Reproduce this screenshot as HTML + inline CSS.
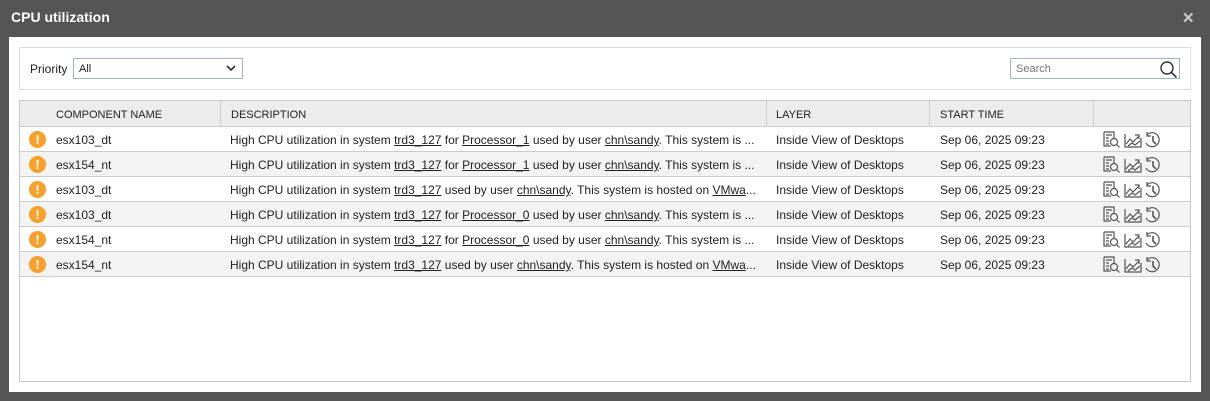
<!DOCTYPE html>
<html><head><meta charset="utf-8"><style>
*{box-sizing:border-box;margin:0;padding:0}
body{width:1210px;height:401px;background:#555555;font-family:"Liberation Sans",Arial,sans-serif;font-size:12px;color:#222;position:relative;overflow:hidden}
.title{position:absolute;left:11px;top:9px;color:#fff;font-weight:bold;font-size:14px}
.close{position:absolute;left:1182px;top:9px;color:#ccc;font-size:15px;font-weight:bold}
.panel{position:absolute;left:9px;top:37px;width:1192px;height:355px;background:#fff}
.filter{position:absolute;left:10px;top:10px;width:1172px;height:43px;border:1px solid #ddd}
.pl{position:absolute;left:10px;top:14px;font-size:12px}
.sel{position:absolute;left:53px;top:10px;width:170px;height:21px;border:1px solid #aab2bd;padding:4px 0 0 5px;font-size:11px}
.sel svg{position:absolute;right:6px;top:6px}
.search{position:absolute;left:990px;top:10px;width:170px;height:21px;border:1px solid #aab2bd;padding:4px 0 0 5px;font-size:11px;color:#777}
.search svg{position:absolute;right:1px;top:1px}
.tbl{position:absolute;left:10px;top:63px;width:1172px;height:282px;border:1px solid #c8c8c8}
.row{position:absolute;left:0;width:1170px;height:25px;border-bottom:1px solid #ccc}
.hdr{background:#ececec;top:0;height:26px;font-size:11px;color:#222}
.c{position:absolute;top:6px;white-space:nowrap}
.hdr .c{top:8px}
.sep{position:absolute;top:0;width:1px;height:26px;background:#ccc}
.g{background:#f3f3f3}
u{text-decoration:underline}
.ex{position:absolute;left:9px;top:4px;width:17px;height:17px;border-radius:50%;background:#f7a02a;color:#fff;font-weight:bold;font-size:13px;text-align:center;line-height:17px}
.ic{position:absolute;left:1082px;top:3px}
</style></head><body>
<div class="title">CPU utilization</div>
<div class="close">✕</div>
<div class="panel">
 <div class="filter">
  <div class="pl">Priority</div>
  <div class="sel">All<svg width="10" height="7"><path d="M1 1l4 4 4-4" stroke="#333" stroke-width="1.6" fill="none"/></svg></div>
  <div class="search">Search<svg width="19" height="18"><circle cx="8" cy="8" r="6" stroke="#333" stroke-width="1.4" fill="none"/><path d="M12.5 12.5l5 5" stroke="#333" stroke-width="1.6"/></svg></div>
 </div>
 <div class="tbl">
  <div class="row hdr"><span class="c" style="left:36px">COMPONENT NAME</span><div class="sep" style="left:200px"></div><span class="c" style="left:211px">DESCRIPTION</span><div class="sep" style="left:746px"></div><span class="c" style="left:756px">LAYER</span><div class="sep" style="left:909px"></div><span class="c" style="left:920px">START TIME</span><div class="sep" style="left:1073px"></div></div>
 </div>
</div>
<script>
var d=[["esx103_dt",'for <u>Processor_1</u> used by user <u>chn\\sandy</u>. This system is ...'],
["esx154_nt",'for <u>Processor_1</u> used by user <u>chn\\sandy</u>. This system is ...'],
["esx103_dt",'used by user <u>chn\\sandy</u>. This system is hosted on <u>VMwa</u>...'],
["esx103_dt",'for <u>Processor_0</u> used by user <u>chn\\sandy</u>. This system is ...'],
["esx154_nt",'for <u>Processor_0</u> used by user <u>chn\\sandy</u>. This system is ...'],
["esx154_nt",'used by user <u>chn\\sandy</u>. This system is hosted on <u>VMwa</u>...']];
var ic='<svg class="ic" width="62" height="19"><g fill="none" stroke="#555" stroke-width="1.2"><path d="M2 2h10v6M2 2v14h7"/><path d="M4 5h6M4 8h3M4 11h3M4 14h3"/><circle cx="12" cy="12" r="3.5"/><path d="M14.5 14.5l3 3"/><path d="M23 4v13h16V8"/><path d="M24 14l4-5 3 3 6-6M33 5h4v4"/><path d="M26 16l4-3 3 2 5-4"/><path d="M45 5a7 7 0 1 1-1 8"/><path d="M45 2v4h4" /><path d="M51 6v5l3 3" stroke-width="1.6"/></g></svg>';
var t=document.querySelector('.tbl'),h='';
d.forEach(function(r,i){h+='<div class="row'+(i%2?' g':'')+'" style="top:'+(26+i*25)+'px"><div class="ex">!</div><span class="c" style="left:36px">'+r[0]+'</span><span class="c" style="left:210px">High CPU utilization in system <u>trd3_127</u> '+r[1]+'</span><span class="c" style="left:756px">Inside View of Desktops</span><span class="c" style="left:920px">Sep 06, 2025 09:23</span>'+ic+'</div>';});
t.insertAdjacentHTML('beforeend',h);
</script>
</body></html>
